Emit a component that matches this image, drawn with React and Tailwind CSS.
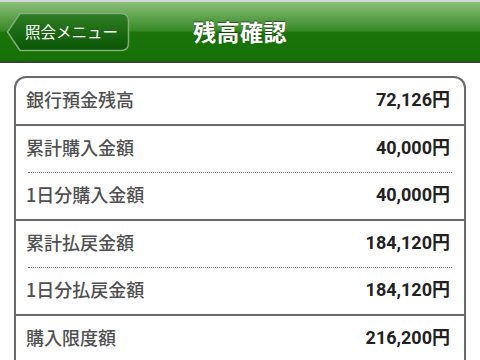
const rows = [
  { label: "銀行預金残高", value: "72,126円", line: "solid" },
  { label: "累計購入金額", value: "40,000円", line: "dotted" },
  { label: "1日分購入金額", value: "40,000円", line: "solid" },
  { label: "累計払戻金額", value: "184,120円", line: "dotted" },
  { label: "1日分払戻金額", value: "184,120円", line: "solid" },
  { label: "購入限度額", value: "216,200円", line: null },
];

const BackButton = () => (
  <button className="relative w-[124px] h-[40px] ml-[6px] flex items-center">
    <svg
      className="absolute inset-0"
      width="124"
      height="40"
      viewBox="0 0 124 40"
    >
      <defs>
        <linearGradient id="bb" x1="0" y1="0" x2="0" y2="1">
          <stop offset="0" stopColor="#2f7d26" />
          <stop offset="0.5" stopColor="#1b6a12" />
          <stop offset="1" stopColor="#0b5406" />
        </linearGradient>
      </defs>
      <path
        d="M1.5 20 L14 1.5 H115 Q122.5 1.5 122.5 9 V31 Q122.5 38.5 115 38.5 H14 Z"
        fill="url(#bb)"
        stroke="#7fae76"
        strokeWidth="1.5"
        strokeLinejoin="round"
      />
    </svg>
    <span className="relative pl-[19px] text-[15.5px] text-white leading-none font-['Noto_Sans_CJK_JP',sans-serif]">
      照会メニュー
    </span>
  </button>
);

export default function App() {
  return (
    <div className="w-[480px] h-[360px] overflow-hidden bg-white font-['Roboto','Noto_Sans_CJK_JP',sans-serif]">
      <div className="h-[2px] bg-[#d6d6d6]" />
      <div className="relative h-[59px] flex items-center bg-[linear-gradient(to_bottom,#8cc07e_0%,#5ea24c_25%,#3a8a28_48%,#1a7409_52%,#157005_100%)]">
        <BackButton />
        <div className="absolute inset-0 flex items-center justify-center pointer-events-none">
          <span className="text-[23px] font-bold text-white tracking-[0.5px] [text-shadow:0_-1px_1px_rgba(0,0,0,0.45)] font-['Noto_Sans_CJK_JP',sans-serif]">
            残高確認
          </span>
        </div>
      </div>
      <div className="h-[2px] bg-[#2f4a2b]" />
      <div className="mx-[14px] mt-[13px] border-2 border-b-0 border-[#6a6a6a] rounded-t-[12px]">
        {rows.map((r) => (
          <div key={r.label}>
            <div className="h-[46px] flex items-center justify-between pl-[10px] pr-[14px] pb-[3px]">
              <span className="text-[18px] font-medium text-[#505050] font-['Noto_Sans_CJK_JP',sans-serif]">
                {r.label}
              </span>
              <span className="text-[18px] font-bold text-[#222222]">
                {r.value}
              </span>
            </div>
            {r.line === "solid" && <div className="h-[2px] bg-[#6a6a6a]" />}
            {r.line === "dotted" && (
              <div className="mx-[12px] border-t border-dotted border-[#777777]" />
            )}
          </div>
        ))}
      </div>
    </div>
  );
}
